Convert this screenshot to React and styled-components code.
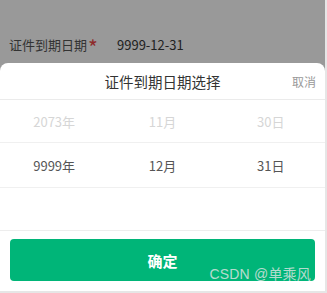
import styled, { createGlobalStyle } from "styled-components";

const GlobalStyle = createGlobalStyle`
  html, body {
    margin: 0;
    padding: 0;
    background: #fff;
  }
  body {
    font-family: "Noto Sans CJK SC", "Noto Sans", sans-serif;
  }
`;

const columns = [
  { prev: "2073年", value: "9999年" },
  { prev: "11月", value: "12月" },
  { prev: "30日", value: "31日" },
];

const Page = styled.div`
  position: relative;
  width: 325px;
  height: 291px;
  display: flex;
  flex-direction: column;
  background: #999999;
  border-right: 2px solid #e6e6e6;
  border-bottom: 2px solid #e6e6e6;
  overflow: hidden;
`;

const FormArea = styled.div`
  height: 64px;
  display: flex;
  align-items: flex-end;
  padding: 0 0 8px 9px;
  box-sizing: border-box;
`;

const Label = styled.span`
  width: 108px;
  font-size: 13px;
  color: #333;
  line-height: 20px;
`;

const Star = styled.span`
  color: #8e2a2a;
  font-size: 21px;
  line-height: 0;
  vertical-align: -6px;
  margin-left: 1px;
`;

const Value = styled.span`
  font-size: 13px;
  color: #222;
  line-height: 20px;
`;

const Sheet = styled.div`
  flex: 1;
  display: flex;
  flex-direction: column;
  background: #fff;
  border-radius: 8px 8px 0 0;
`;

const Header = styled.div`
  position: relative;
  height: 36px;
  display: flex;
  align-items: center;
  justify-content: center;
  border-bottom: 1px solid #ebebeb;
`;

const Title = styled.span`
  font-size: 14.5px;
  color: #333;
`;

const Cancel = styled.span`
  position: absolute;
  right: 9px;
  top: 10px;
  font-size: 12px;
  color: #999;
`;

const Picker = styled.div`
  display: flex;
  flex-direction: column;
`;

const Row = styled.div`
  height: ${(p) => p.$h}px;
  display: grid;
  grid-template-columns: repeat(3, 1fr);
  align-items: center;
  border-bottom: 1px solid ${(p) => (p.$line ? "#f0f0f0" : "transparent")};
`;

const Cell = styled.span`
  text-align: center;
  font-size: 13px;
  color: ${(p) => (p.$active ? "#555" : "#d6d6d6")};
`;

const Footer = styled.div`
  border-top: 1px solid #ededed;
  padding: 8px 10px 10px;
`;

const ConfirmButton = styled.button`
  width: 100%;
  height: 42px;
  border: none;
  border-radius: 4px;
  background: #00b578;
  color: #fff;
  font-family: inherit;
  font-size: 15px;
  font-weight: 700;
  display: flex;
  align-items: center;
  justify-content: center;
`;

const Watermark = styled.span`
  position: absolute;
  right: 14px;
  bottom: 8px;
  font-family: "Liberation Sans", "Noto Sans CJK SC", sans-serif;
  font-size: 14px;
  color: rgba(230, 230, 230, 0.8);
  letter-spacing: 0.2px;
`;

export default function App() {
  return (
    <>
      <GlobalStyle />
      <Page>
        <FormArea>
          <Label>
            证件到期日期<Star>*</Star>
          </Label>
          <Value>9999-12-31</Value>
        </FormArea>
        <Sheet>
          <Header>
            <Title>证件到期日期选择</Title>
            <Cancel>取消</Cancel>
          </Header>
          <Picker>
            <Row $h={42} $line>
              {columns.map((c) => (
                <Cell key={c.prev}>{c.prev}</Cell>
              ))}
            </Row>
            <Row $h={44} $line>
              {columns.map((c) => (
                <Cell key={c.value} $active>
                  {c.value}
                </Cell>
              ))}
            </Row>
            <Row $h={41} />
          </Picker>
          <Footer>
            <ConfirmButton>确定</ConfirmButton>
          </Footer>
        </Sheet>
        <Watermark>CSDN @单乘风</Watermark>
      </Page>
    </>
  );
}
